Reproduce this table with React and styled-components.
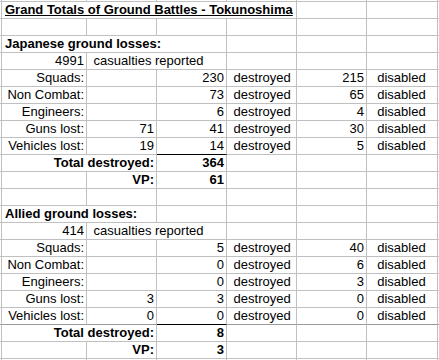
import React from "react";
import styled, { createGlobalStyle } from "styled-components";

const Global = createGlobalStyle`
  html, body { margin: 0; padding: 0; background: #ffffff; overflow: hidden; }
  body { font-family: "Liberation Sans", Arial, sans-serif; }
`;

const GRID = "#c0c0c0";

const Sheet = styled.div`
  display: grid;
  grid-template-columns: 2px 85px 70px 70px 70px 70px 71px 1fr;
  grid-template-rows: 2px;
  grid-auto-rows: 17px;
  width: 439px;
  height: 360px;
  overflow: hidden;
  font-family: "Liberation Sans", Arial, sans-serif;
  font-size: 13px;
  color: #000;
`;

const Cell = styled.div`
  grid-column: span ${(p) => p.$span || 1};
  box-sizing: border-box;
  border-right: 1px solid ${GRID};
  border-bottom: 1px solid ${(p) => p.$rule || GRID};
  line-height: 16px;
  white-space: pre;
  overflow: visible;
  text-align: ${(p) => (p.$right ? "right" : "left")};
  padding: ${(p) => (p.$right ? "0 2px 0 0" : "0 0 0 3px")};
  font-weight: ${(p) => (p.$bold ? 700 : 400)};
  text-decoration: ${(p) => (p.$underline ? "underline" : "none")};
  text-underline-offset: 1px;
`;

const EdgeCell = styled.div`
  box-sizing: border-box;
  border-right: 1px solid ${GRID};
  border-bottom: 1px solid ${(p) => p.$rule || GRID};
`;

const num = (t, extra = {}) => ({ t, right: true, ...extra });
const txt = (t, extra = {}) => ({ t, ...extra });

const lossRow = (label, guns, destroyed, disabled, extra = {}) => [
  num(label),
  guns === null ? txt("") : num(guns),
  num(destroyed, extra.ruleC ? { rule: "#000" } : {}),
  txt(" destroyed"),
  num(disabled),
  txt("  disabled"),
  txt(""),
];

const section = (heading, headingSpan, casualties, rows, total, vp) => [
  { cells: [txt(heading, { bold: true, span: headingSpan })] },
  { cells: [num(casualties), txt(" casualties reported", { span: 2 })] },
  ...rows,
  {
    cells: [
      num("Total destroyed:", { bold: true, span: 2 }),
      num(total, { bold: true }),
    ],
  },
  { cells: [txt(""), num("VP:", { bold: true }), num(vp, { bold: true })] },
];

const rows = [
  { edge: true },
  {
    cells: [
      txt("Grand Totals of Ground Battles - Tokunoshima", {
        bold: true,
        underline: true,
        span: 4,
      }),
    ],
  },
  { cells: [] },
  ...section(
    "Japanese ground losses:",
    3,
    "4991",
    [
      { cells: lossRow("Squads:", null, "230", "215") },
      { cells: lossRow("Non Combat:", null, "73", "65") },
      { cells: lossRow("Engineers:", null, "6", "4") },
      { cells: lossRow("Guns lost:", "71", "41", "30") },
      { cells: lossRow("Vehicles lost:", "19", "14", "5", { ruleC: true }) },
    ],
    "364",
    "61"
  ),
  { cells: [] },
  ...section(
    "Allied ground losses:",
    2,
    "414",
    [
      { cells: lossRow("Squads:", null, "5", "40") },
      { cells: lossRow("Non Combat:", null, "0", "6") },
      { cells: lossRow("Engineers:", null, "0", "3") },
      { cells: lossRow("Guns lost:", "3", "3", "0") },
      {
        cells: lossRow("Vehicles lost:", "0", "0", "0", { ruleC: true }),
        rule: "#9a9a9a",
      },
    ],
    "8",
    "3"
  ),
  { cells: [] },
];

const TOTAL_COLS = 7;

function Row({ row }) {
  if (row.edge) {
    return Array.from({ length: 8 }, (_, i) => <EdgeCell key={i} />);
  }
  const out = [<EdgeCell key="e" $rule={row.rule} />];
  let used = 0;
  row.cells.forEach((c, i) => {
    const span = c.span || 1;
    used += span;
    out.push(
      <Cell
        key={i}
        $span={span}
        $right={c.right}
        $bold={c.bold}
        $underline={c.underline}
        $rule={c.rule || row.rule}
      >
        {c.t}
      </Cell>
    );
  });
  for (let k = used; k < TOTAL_COLS; k++) {
    out.push(<Cell key={"f" + k} $rule={row.rule} />);
  }
  return out;
}

export default function App() {
  return (
    <>
      <Global />
      <Sheet>
        {rows.map((r, i) => (
          <Row key={i} row={r} />
        ))}
      </Sheet>
    </>
  );
}
